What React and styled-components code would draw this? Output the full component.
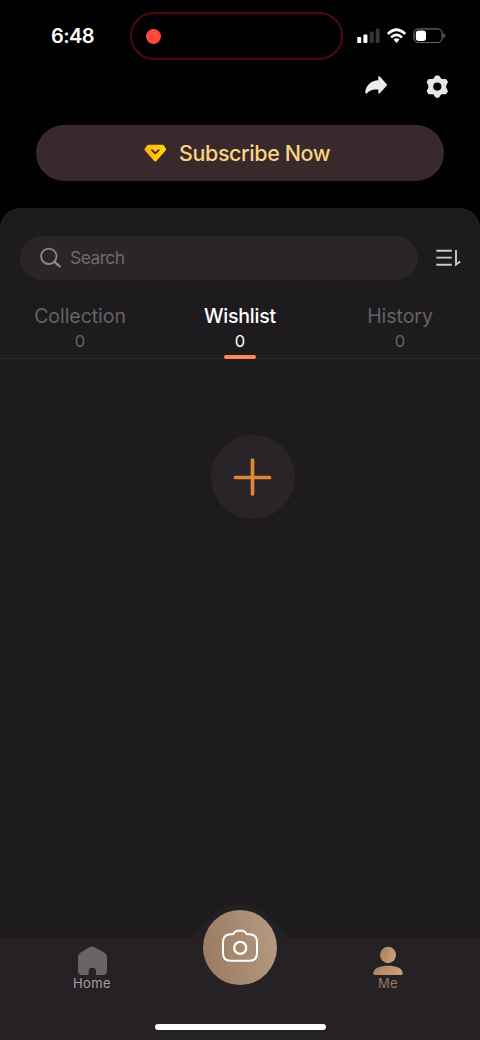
import React, { useState } from "react";
import styled, { createGlobalStyle } from "styled-components";

const GlobalStyle = createGlobalStyle`
  * {
    box-sizing: border-box;
  }

  body {
    margin: 0;
    background-color: #000;
    font-family: Inter, "Liberation Sans", sans-serif;
  }

  button {
    border: none;
    padding: 0;
    background: none;
    font-family: inherit;
    cursor: pointer;
  }

  svg {
    display: block;
  }
`;

// Styled Components
const Screen = styled.div`
  display: flex;
  flex-direction: column;
  width: 480px;
  height: 1040px;
  overflow: hidden;
  background-color: #010002;
`;

const StatusBar = styled.header`
  display: flex;
  align-items: center;
  height: 72px;
  flex-shrink: 0;
`;

const Time = styled.div`
  width: 130px;
  padding-left: 51px;
  font-size: 20px;
  font-weight: 600;
  line-height: 24px;
  letter-spacing: -0.6px;
  color: #fff;
`;

const Island = styled.div`
  display: flex;
  align-items: center;
  width: 213px;
  height: 48px;
  padding-left: 14px;
  border: 2px solid #4b0b10;
  border-radius: 24px;
`;

const RecordingDot = styled.div`
  width: 15px;
  height: 15px;
  border-radius: 50%;
  background-color: #ff4938;
`;

const StatusIcons = styled.div`
  margin-left: 14px;
`;

const Actions = styled.div`
  display: flex;
  justify-content: flex-end;
  gap: 36px;
  height: 53px;
  padding: 2px 31px 0 0;
  flex-shrink: 0;
`;

const IconButton = styled.button`
  width: 24px;
  height: 26px;
`;

const SubscribeButton = styled.button`
  display: flex;
  align-items: center;
  height: 56px;
  margin: 0 36px 27px;
  padding-left: 108px;
  gap: 13px;
  border-radius: 28px;
  flex-shrink: 0;
  background-color: #37292c;
  color: #fbd182;
  font-size: 21.5px;
  font-weight: 500;
  letter-spacing: -0.4px;
  white-space: nowrap;
`;

const Panel = styled.main`
  display: flex;
  flex-direction: column;
  flex: 1;
  border-radius: 20px 20px 0 0;
  background-color: #1e1b1e;
`;

const SearchRow = styled.div`
  display: flex;
  align-items: center;
  gap: 17px;
  padding: 28px 0 0 20px;
`;

const SearchBox = styled.label`
  display: flex;
  align-items: center;
  width: 398px;
  height: 44px;
  padding-left: 19px;
  gap: 7px;
  border-radius: 22px;
  background-color: #2a2528;
`;

const SearchInput = styled.input`
  width: 300px;
  padding: 0 0 2px;
  border: none;
  outline: none;
  background: none;
  font-family: inherit;
  font-size: 17.5px;
  letter-spacing: -0.6px;
  color: #fff;

  &::placeholder {
    color: #6d6a6d;
    opacity: 1;
  }
`;

const Tabs = styled.nav`
  display: grid;
  grid-template-columns: repeat(3, 1fr);
  height: 79px;
  padding-top: 24px;
  border-bottom: 1px solid #292629;
`;

const Tab = styled.button`
  display: flex;
  flex-direction: column;
  align-items: center;
  height: 55px;
  color: ${({ $active }) => ($active ? "#fff" : "#656265")};
`;

const TabLabel = styled.span`
  font-size: 19.5px;
  font-weight: ${({ $active }) => ($active ? 500 : 400)};
  line-height: 24px;
  letter-spacing: ${({ $active }) => ($active ? "-0.2px" : "-0.05px")};
`;

const TabCount = styled.span`
  font-size: 16.5px;
  line-height: 26px;
`;

const TabIndicator = styled.span`
  width: 32px;
  height: 4px;
  margin-top: 1px;
  border-radius: 2px;
  background-color: #f98c55;
`;

const Content = styled.section`
  flex: 1;
  padding: 76px 0 0 211px;
`;

const AddButton = styled.button`
  display: flex;
  align-items: center;
  justify-content: center;
  width: 84px;
  height: 84px;
  border-radius: 50%;
  background-color: #292427;
`;

const BottomBar = styled.footer`
  position: relative;
  display: flex;
  flex-direction: column;
  height: 102px;
  background-color: #252125;
`;

const NavBump = styled.svg`
  position: absolute;
  top: -33px;
  left: 184px;
`;

const NavItems = styled.div`
  display: flex;
  justify-content: space-between;
  height: 86px;
  padding: 8px 52px 0;
`;

const NavItem = styled.button`
  display: flex;
  flex-direction: column;
  align-items: center;
  width: 80px;
  height: 50px;
  color: ${({ $color }) => $color};
`;

const NavLabel = styled.span`
  font-size: 13px;
  line-height: 16px;
  letter-spacing: 0.45px;
`;

const CameraButton = styled.button`
  position: absolute;
  top: -28px;
  left: 203px;
  display: flex;
  align-items: center;
  justify-content: center;
  width: 74px;
  height: 75px;
  padding-bottom: 3px;
  border-radius: 50%;
  background: linear-gradient(80deg, #987a60, #b69a82);
`;

const HomeIndicator = styled.div`
  width: 171px;
  height: 6px;
  margin-left: 155px;
  border-radius: 3px;
  background-color: #fff;
`;

const StatusGlyphs = () => (
  <svg width="90" height="20" viewBox="357 26 90 20">
    <g fill="#fff">
      <rect x="357.2" y="37" width="4" height="6" rx="1" />
      <rect x="363.4" y="34.5" width="4" height="8.5" rx="1" />
      <rect x="369.7" y="31.5" width="4" height="11.5" rx="1" fill="#353336" />
      <rect x="375.7" y="28.5" width="4" height="14.5" rx="1" fill="#353336" />
    </g>
    <g fill="none" stroke="#fff" strokeWidth="2.7">
      <path d="M387.9 34Q396.5 25.6 405.2 34" />
      <path d="M391.1 37.4Q396.5 32.2 402 37.4" />
    </g>
    <path d="M393.6 39.5Q396.5 37 399.5 39.5L396.5 43Z" fill="#fff" />
    <rect
      x="413.9"
      y="28.9"
      width="28.2"
      height="13.6"
      rx="4.6"
      fill="none"
      stroke="#69676a"
      strokeWidth="1.2"
    />
    <rect x="415.8" y="30.6" width="10.2" height="10.3" rx="3" fill="#fff" />
    <path d="M443.4 33.2Q447 35.7 443.4 38.2Z" fill="#69676a" />
  </svg>
);

const ShareIcon = () => (
  <svg width="24" height="26" viewBox="365 74 24 26">
    <path
      d="M378.3 76.6Q378.9 75.8 379.8 76.5L386.8 84.2Q387.3 84.9 386.8 85.6L379.9 93.3Q378.8 94 378.3 93V89.6Q370.6 88.6 367 93.2Q365.3 94.4 365.2 92.2C365.8 85.2 371.5 80.6 378.3 80.3Z"
      fill="#ececec"
    />
  </svg>
);

const GearIcon = () => (
  <svg width="24" height="26" viewBox="425 74 24 26">
    <path
      fillRule="evenodd"
      fill="#e6e6e6"
      stroke="#e6e6e6"
      strokeWidth="2"
      strokeLinejoin="round"
      d="M436.2 76.4H438.4L440.4 79.4L441.7 80.1L445.6 80L446.9 82L445.2 85.4V87.8L446.9 91.2L445.6 93.2L441.7 93.1L440.4 93.8L438.4 96.8H436.2L434.2 93.8L432.9 93.1L429 93.2L427.7 91.2L429.4 87.8V85.4L427.7 82L429 80L432.9 80.1L434.2 79.4ZM437.3 81.5A5.1 5.1 0 1 0 437.3 91.7A5.1 5.1 0 1 0 437.3 81.5Z"
    />
  </svg>
);

const GemIcon = () => (
  <svg width="22" height="18" viewBox="144 144 22 18">
    <defs>
      <linearGradient id="gem" x1="0" y1="0" x2="1" y2="0">
        <stop offset="0" stopColor="#ffac18" />
        <stop offset="1" stopColor="#ffdb00" />
      </linearGradient>
    </defs>
    <path
      d="M148.4 144.8H162.4Q163.4 144.8 163.9 145.6L165.8 148.6Q166.4 149.6 165.6 150.4L156.4 160.9Q155.3 162 154.2 160.9L144.9 150.4Q144.2 149.6 144.8 148.6L146.9 145.6Q147.4 144.8 148.4 144.8Z"
      fill="url(#gem)"
    />
    <path
      d="M151.9 150.2L155.3 153.3L158.7 150.2"
      fill="none"
      stroke="#48291a"
      strokeWidth="1.8"
      strokeLinecap="round"
      strokeLinejoin="round"
    />
  </svg>
);

const SearchIcon = () => (
  <svg width="24" height="24" viewBox="39 246 24 24" fill="none" stroke="#8c898c">
    <circle cx="48.8" cy="256.3" r="7.7" strokeWidth="1.8" />
    <path d="M54.4 261.8L59.8 266.3" strokeWidth="2.4" strokeLinecap="round" />
  </svg>
);

const SortIcon = () => (
  <svg
    width="28"
    height="24"
    viewBox="435 246 28 24"
    fill="none"
    stroke="#cbc9cb"
    strokeWidth="1.9"
  >
    <path d="M436.3 250.7H451.8M436.3 257.6H451.8M436.3 264.8H451.8" />
    <path d="M456 250V264.6L460.2 261.5" />
  </svg>
);

const PlusIcon = () => (
  <svg width="40" height="40" viewBox="0 0 40 40">
    <path
      d="M19.5 3V37M2.5 20.5H36.5"
      stroke="#df8739"
      strokeWidth="3.7"
      strokeLinecap="round"
    />
  </svg>
);

const HomeIcon = () => (
  <svg width="30" height="29" viewBox="77 946 30 29">
    <path
      d="M90 947.1Q92 946 94 947.1L104.6 952.7Q107 954.2 107 957V971Q107 975 103 975H96V971.5A3.7 3.7 0 0 0 88.6 971.5V975H82Q78 975 78 971V957Q78 954.2 80.2 952.7Z"
      fill="#6a6266"
    />
  </svg>
);

const PersonIcon = () => (
  <svg width="30" height="29" viewBox="373 946 30 29">
    <defs>
      <linearGradient id="person" x1="0" y1="0" x2="1" y2="0.3">
        <stop offset="0" stopColor="#a87b5b" />
        <stop offset="1" stopColor="#c89f7d" />
      </linearGradient>
    </defs>
    <ellipse cx="388" cy="955" rx="8" ry="8.2" fill="url(#person)" />
    <path
      d="M373.2 973C373.8 968 380 965.7 388 965.7S402.2 968 402.8 973Q402.9 975 401 975H375Q373.1 975 373.2 973Z"
      fill="url(#person)"
    />
  </svg>
);

const CameraIcon = () => (
  <svg
    width="38"
    height="34"
    viewBox="221 929 38 34"
    fill="none"
    stroke="#fff"
    strokeWidth="2"
  >
    <path
      strokeLinejoin="round"
      d="M230 934.3H232.2Q233.5 934.3 234.1 933Q235.3 930.8 237.5 930.8H242.5Q244.7 930.8 245.9 933Q246.5 934.3 247.8 934.3H250Q257 935 257 942V953.3Q257 960.8 249.5 960.8H230.5Q223 960.8 223 953.3V942Q223 935 230 934.3Z"
    />
    <circle cx="240.2" cy="947.9" r="6" strokeWidth="2.3" />
  </svg>
);

const tabs = [
  { name: "Collection", count: 0 },
  { name: "Wishlist", count: 0 },
  { name: "History", count: 0 },
];

const App = () => {
  const [activeTab, setActiveTab] = useState("Wishlist");

  return (
    <Screen>
      <GlobalStyle />
      <StatusBar>
        <Time>6:48</Time>
        <Island>
          <RecordingDot />
        </Island>
        <StatusIcons>
          <StatusGlyphs />
        </StatusIcons>
      </StatusBar>
      <Actions>
        <IconButton aria-label="Share">
          <ShareIcon />
        </IconButton>
        <IconButton aria-label="Settings">
          <GearIcon />
        </IconButton>
      </Actions>
      <SubscribeButton>
        <GemIcon />
        Subscribe Now
      </SubscribeButton>
      <Panel>
        <SearchRow>
          <SearchBox>
            <SearchIcon />
            <SearchInput placeholder="Search" />
          </SearchBox>
          <IconButton aria-label="Sort">
            <SortIcon />
          </IconButton>
        </SearchRow>
        <Tabs>
          {tabs.map(({ name, count }) => (
            <Tab
              key={name}
              $active={name === activeTab}
              onClick={() => setActiveTab(name)}
            >
              <TabLabel $active={name === activeTab}>{name}</TabLabel>
              <TabCount>{count}</TabCount>
              {name === activeTab && <TabIndicator />}
            </Tab>
          ))}
        </Tabs>
        <Content>
          <AddButton aria-label="Add">
            <PlusIcon />
          </AddButton>
        </Content>
        <BottomBar>
          {/* Raised part of the bar behind the camera button */}
          <NavBump width="112" height="34" viewBox="0 0 112 34">
            <path
              d="M0 34Q7 33 13 26C28 9 37 0 56 0S84 9 99 26Q105 33 112 34Z"
              fill="#232023"
            />
          </NavBump>
          <NavItems>
            <NavItem $color="#a3a0a3">
              <HomeIcon />
              <NavLabel>Home</NavLabel>
            </NavItem>
            <NavItem $color="#94795f">
              <PersonIcon />
              <NavLabel>Me</NavLabel>
            </NavItem>
          </NavItems>
          <CameraButton aria-label="Camera">
            <CameraIcon />
          </CameraButton>
          <HomeIndicator />
        </BottomBar>
      </Panel>
    </Screen>
  );
};

export default App;
